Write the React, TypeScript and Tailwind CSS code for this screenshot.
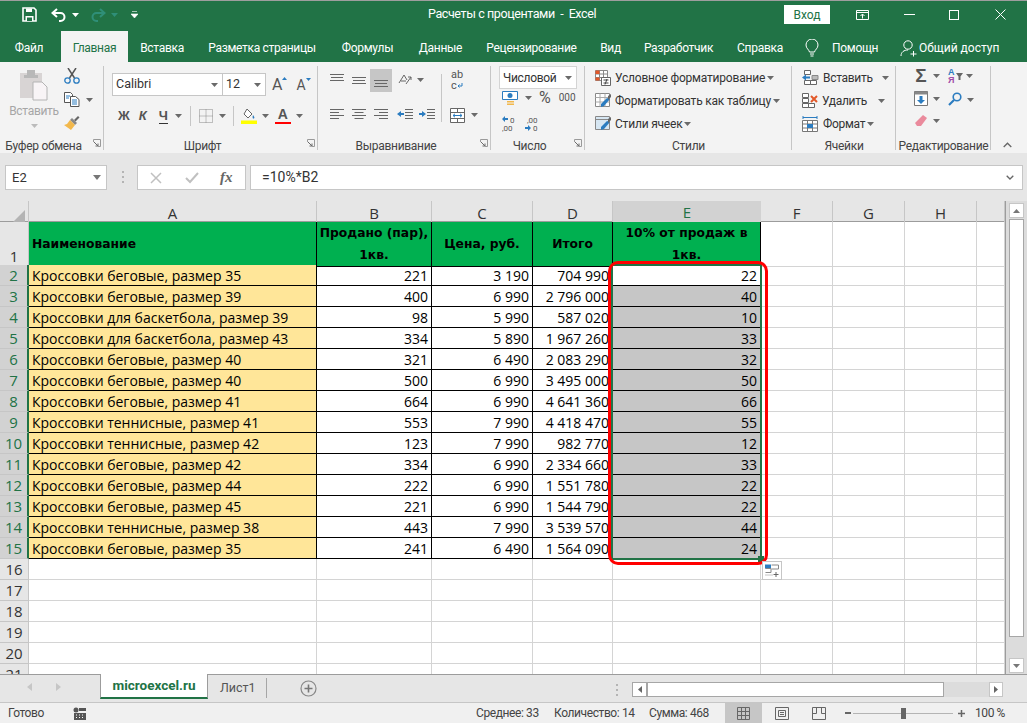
import type { ReactNode } from "react";

const tabs = [
  { label: "Вставка", w: "w-[68px]" },
  { label: "Разметка страницы", w: "w-[132px]" },
  { label: "Формулы", w: "w-[79px]" },
  { label: "Данные", w: "w-[67px]" },
  { label: "Рецензирование", w: "w-[115px]" },
  { label: "Вид", w: "w-[43px]" },
  { label: "Разработчик", w: "w-[93px]" },
  { label: "Справка", w: "w-[70px]" },
];

const columns = ["A", "B", "C", "D", "E", "F", "G", "H", ""];

const rows = [
  ["Кроссовки беговые, размер 35", "221", "3 190", "704 990", "22"],
  ["Кроссовки беговые, размер 39", "400", "6 990", "2 796 000", "40"],
  ["Кроссовки для баскетбола, размер 39", "98", "5 990", "587 020", "10"],
  ["Кроссовки для баскетбола, размер 43", "334", "5 890", "1 967 260", "33"],
  ["Кроссовки беговые, размер 40", "321", "6 490", "2 083 290", "32"],
  ["Кроссовки беговые, размер 40", "500", "6 990", "3 495 000", "50"],
  ["Кроссовки беговые, размер 41", "664", "6 990", "4 641 360", "66"],
  ["Кроссовки теннисные, размер 41", "553", "7 990", "4 418 470", "55"],
  ["Кроссовки теннисные, размер 42", "123", "7 990", "982 770", "12"],
  ["Кроссовки беговые, размер 42", "334", "6 990", "2 334 660", "33"],
  ["Кроссовки беговые, размер 44", "222", "6 990", "1 551 780", "22"],
  ["Кроссовки беговые, размер 45", "221", "6 990", "1 544 790", "22"],
  ["Кроссовки теннисные, размер 38", "443", "7 990", "3 539 570", "44"],
  ["Кроссовки беговые, размер 35", "241", "6 490", "1 564 090", "24"],
];

const gridCols =
  "grid grid-cols-[29px_288px_115px_101px_80px_148px_72px_72px_72px_28px]";

function Caret({ className = "" }: { className?: string }) {
  return (
    <svg width="7" height="4" viewBox="0 0 7 4" className={`shrink-0 ${className}`}>
      <path d="M0 0h7L3.500 4z" fill="#6a6a6a" />
    </svg>
  );
}

function Launcher() {
  return (
    <svg width="8" height="8" viewBox="0 0 8 8" className="absolute right-[3px] bottom-[6px]">
      <path d="M.5 3V.5H7.5V7.500H5" fill="none" stroke="#9a9a9a" />
      <path d="M1 3l4 4M5 4.500V7H2.500" fill="none" stroke="#6a6a6a" />
    </svg>
  );
}

function Group({
  width,
  label,
  launcher,
  children,
}: {
  width: string;
  label: string;
  launcher?: boolean;
  children: ReactNode;
}) {
  return (
    <section className={`relative flex h-[87px] shrink-0 flex-col ${width}`}>
      <div className="h-[73px] shrink-0">{children}</div>
      <div
        className={`flex h-[14px] items-center justify-center whitespace-nowrap text-[12px] tracking-[-0.3px] text-[#444] ${launcher ? "pr-[17px]" : ""}`}
      >
        {label}
      </div>
      {launcher && <Launcher />}
      <div className="absolute top-0 right-0 h-[84px] w-px bg-[#c6c6c6]" />
    </section>
  );
}

function Lines({ kind }: { kind: "top" | "mid" | "bot" | "left" | "center" | "right" }) {
  const d = {
    top: "M0 1.5h14M1 4.5h12M0 7.5h14",
    mid: "M0 4.5h14M1 7.5h12M0 10.5h14",
    bot: "M0 7.5h14M1 10.5h12M0 13.5h14",
    left: "M0 1.5h14M0 4.5h9M0 7.5h14M0 10.5h9",
    center: "M0 1.5h14M2.5 4.5h9M0 7.5h14M2.5 10.5h9",
    right: "M0 1.5h14M5 4.5h9M0 7.5h14M5 10.5h9",
  }[kind];
  return (
    <svg width="14" height="14" viewBox="0 0 14 14">
      <path d={d} stroke="#666" fill="none" />
    </svg>
  );
}

function SaveIcon() {
  return (
    <svg width="15" height="15" viewBox="0 0 15 15">
      <path d="M1 1h11l2 2v11H1z" fill="none" stroke="#fff" strokeWidth="1.6" />
      <path d="M4 1.5h6V5H4zM3.5 9h8v5h-8z" fill="#fff" />
      <path d="M5 10.5h5V14H5z" fill="#217346" />
    </svg>
  );
}

function UndoIcon({ color }: { color: string }) {
  return (
    <svg width="16" height="14" viewBox="0 0 16 14">
      <path d="M6 1L1.5 5 6 9" fill="none" stroke={color} strokeWidth="2" />
      <path d="M2 5h7.5a4 4 0 0 1 0 8H8" fill="none" stroke={color} strokeWidth="2" />
    </svg>
  );
}

function RedoIcon({ color }: { color: string }) {
  return (
    <svg width="16" height="14" viewBox="0 0 16 14">
      <path d="M10 1l4.500 4L10 9" fill="none" stroke={color} strokeWidth="2" />
      <path d="M14 5H6.500a4 4 0 0 0 0 8H8" fill="none" stroke={color} strokeWidth="2" />
    </svg>
  );
}

function TitleBar() {
  return (
    <header className="flex h-[31px] shrink-0 items-center border-t border-[#9e9e9e] bg-[#217346] pb-[3px] text-white">
      <div className="ml-[22px] flex items-center">
        <SaveIcon />
        <span className="ml-[14px]">
          <UndoIcon color="#ffffff" />
        </span>
        <svg width="7" height="4" viewBox="0 0 7 4" className="ml-[5px]">
          <path d="M0 0h7L3.500 4z" fill="#fff" />
        </svg>
        <span className="ml-[11px]">
          <RedoIcon color="#2f8f78" />
        </span>
        <svg width="7" height="4" viewBox="0 0 7 4" className="ml-[5px]">
          <path d="M0 0h7L3.500 4z" fill="#2f8f78" />
        </svg>
        <svg width="7" height="8" viewBox="0 0 7 8" className="ml-[13px]">
          <path d="M1 .5h5M0 3h7L3.500 7z" fill="#fff" stroke="#fff" strokeWidth=".6" />
        </svg>
      </div>
      <div className="ml-[290px] w-[180px] whitespace-pre text-[12.5px] tracking-[-0.4px]">Расчеты с процентами  -  Excel</div>
      <button className="ml-[176px] flex h-[19px] w-[46px] items-center justify-center bg-white text-[12px] text-[#217346]">
        Вход
      </button>
      <svg width="13" height="10" viewBox="0 0 13 10" className="ml-[26px]">
        <path d="M.5.5h12v9H.5zM.5 2.500h12" fill="none" stroke="#fff" />
        <path d="M6.500 8.500V4M4.500 6l2-2 2 2" fill="none" stroke="#fff" />
      </svg>
      <div className="ml-[35px] h-px w-[11px] bg-white" />
      <div className="ml-[34px] size-[10px] border border-white" />
      <svg width="11" height="11" viewBox="0 0 11 11" className="ml-[36px]">
        <path d="M.5.5l10 10M10.500.5l-10 10" stroke="#fff" />
      </svg>
    </header>
  );
}

function TabRow() {
  return (
    <nav className="flex h-[31px] shrink-0 items-stretch bg-[#217346] text-[12px] tracking-[-0.3px] text-white">
      <div className="flex w-[61px] items-center justify-center pt-[3px] pr-[3px]">Файл</div>
      <div className="flex w-[67px] items-center justify-center bg-[#f3f3f3] pt-[3px] text-[#217346]">Главная</div>
      {tabs.map((tab) => (
        <div key={tab.label} className={`flex items-center justify-center whitespace-nowrap pt-[3px] ${tab.w}`}>
          {tab.label}
        </div>
      ))}
      <div className="ml-[10px] flex items-center pt-[3px]">
        <svg width="14" height="18" viewBox="0 0 14 18">
          <path
            d="M4.500 13C4 10.500 1 9.500 1 6a6 6 0 0 1 12 0c0 3.500-3 4.500-3.500 7zM5 15h4M5.500 17h3"
            fill="none"
            stroke="#fff"
          />
        </svg>
      </div>
      <div className="ml-[13px] flex w-[55px] items-center pt-[3px]">Помощн</div>
      <div className="ml-[13px] flex items-center pt-[3px]">
        <svg width="18" height="17" viewBox="0 0 18 17">
          <circle cx="8" cy="5" r="4.200" fill="none" stroke="#fff" />
          <path d="M1 16c0-4 3-6 7-6M13.500 11v5.500M10.500 14h6" fill="none" stroke="#fff" />
        </svg>
      </div>
      <div className="ml-px flex items-center whitespace-nowrap pt-[3px] tracking-normal">Общий доступ</div>
    </nav>
  );
}

function ClipboardGroup() {
  return (
    <Group width="w-[104px]" label="Буфер обмена" launcher>
      <div className="flex">
        <div className="ml-[9px] flex w-[50px] flex-col items-center pt-[3px]">
          <svg width="30" height="32" viewBox="0 0 30 32">
            <path d="M1 4h22v25H1z" fill="#d8d4d4" />
            <path d="M8 1h8v5h3v3H5V6h3z" fill="#b8b8b8" />
            <path d="M14 13h9l5 5v13H14z" fill="#f8f4f6" stroke="#b4b4b4" />
          </svg>
          <div className="mt-[2px] text-[12px] leading-[16px] tracking-[-0.3px] text-[#a6a6a6]">Вставить</div>
          <Caret className="mt-[5px] opacity-40" />
        </div>
        <div className="ml-[5px] flex flex-col gap-[8px] pt-[2px]">
          <svg width="16" height="16" viewBox="0 0 16 16">
            <path d="M4 0l6.500 10M12 0L5.500 10" stroke="#555" strokeWidth="1.5" />
            <circle cx="3.500" cy="12.500" r="2.700" fill="none" stroke="#2b7cc0" strokeWidth="1.3" />
            <circle cx="12.500" cy="12.500" r="2.700" fill="none" stroke="#2b7cc0" strokeWidth="1.3" />
          </svg>
          <div className="flex items-center">
            <svg width="16" height="15" viewBox="0 0 16 15">
              <path d="M.5.500h6l2 2v8H.5z" fill="#fff" stroke="#555" />
              <path d="M6.500 4.500h5l3.500 3v7H6.500z" fill="#fff" stroke="#555" />
              <path d="M2 4h4M2 6h3M8 8h5M8 10h5M8 12h5" stroke="#2b7cc0" />
            </svg>
            <Caret className="ml-[6px]" />
          </div>
          <svg width="16" height="15" viewBox="0 0 16 15">
            <path d="M10 5l4-4 1.500 1.500-4 4z" fill="#666" />
            <path d="M8 3l5 5-2 2-5-5z" fill="#888" />
            <path d="M6 5l5 5-4 5-7-5 3-1z" fill="#f2b84c" />
          </svg>
        </div>
      </div>
    </Group>
  );
}

function FontGroup() {
  return (
    <Group width="w-[214px]" label="Шрифт" launcher>
      <div className="ml-[8px] flex pt-[7px]">
        <div className="flex h-[23px] w-[111px] items-center justify-between border border-[#c6c6c6] bg-white px-[3px] text-[12.5px] text-[#333]">
          Calibri
          <Caret className="mr-[1px]" />
        </div>
        <div className="flex h-[23px] w-[43px] items-center justify-between border border-l-0 border-[#c6c6c6] bg-white px-[3px] text-[12.5px] text-[#333]">
          12
          <Caret className="mr-[1px]" />
        </div>
        <div className="ml-[6px] flex items-center text-[16px] text-[#555]">
          <span>A</span>
          <svg width="5" height="3" viewBox="0 0 5 3" className="mb-[13px]">
            <path d="M0 3h5L2.500 0z" fill="#2b7cc0" />
          </svg>
        </div>
        <div className="ml-[9px] flex items-center text-[14px] text-[#555]">
          <span>A</span>
          <svg width="5" height="3" viewBox="0 0 5 3" className="mb-[12px]">
            <path d="M0 0h5L2.500 3z" fill="#2b7cc0" />
          </svg>
        </div>
      </div>
      <div className="ml-[14px] mt-[9px] flex h-[20px] items-center text-[#555]">
        <span className="font-['Liberation_Sans'] text-[13px] font-bold">Ж</span>
        <span className="ml-[9px] font-['Liberation_Sans'] text-[13px] font-bold italic">К</span>
        <span className="ml-[12px] border-b border-[#333] font-['Liberation_Sans'] text-[13px] leading-[15px] font-bold">Ч</span>
        <Caret className="ml-[7px]" />
        <div className="ml-[8px] h-[20px] w-px bg-[#c6c6c6]" />
        <svg width="14" height="14" viewBox="0 0 14 14" className="ml-[8px]">
          <path d="M.5.500h13v13H.500zM7 .5v13M.5 7h13" fill="none" stroke="#888" strokeDasharray="1 1" />
        </svg>
        <Caret className="ml-[6px]" />
        <div className="ml-[7px] h-[20px] w-px bg-[#c6c6c6]" />
        <svg width="16" height="16" viewBox="0 0 16 16" className="ml-[7px]">
          <path d="M6 1l5 5-4 4-4-4z" fill="#fff" stroke="#666" />
          <path d="M12 7c1 1.500 2 2.500 1 3.500-1 .5-2-.5-1-3.500z" fill="#2b7cc0" />
          <path d="M0 12.500h16V16H0z" fill="#ffff00" />
        </svg>
        <Caret className="ml-[5px]" />
        <div className="ml-[6px] flex h-[16px] w-[16px] flex-col items-center">
          <span className="font-['Liberation_Sans'] text-[14px] leading-[13px] font-bold text-[#555]">A</span>
          <span className="mt-[1px] h-[4px] w-[16px] bg-[#ff0000]" />
        </div>
        <Caret className="ml-[5px]" />
      </div>
    </Group>
  );
}

function AlignGroup() {
  return (
    <Group width="w-[173px]" label="Выравнивание" launcher>
      <div className="flex">
        <div className="ml-[12px] flex flex-col">
          <div className="flex h-[28px] items-center">
            <Lines kind="top" />
            <span className="ml-[8px]">
              <Lines kind="mid" />
            </span>
            <div className="ml-[4px] flex h-[23px] w-[22px] items-center justify-center bg-[#c6c6c6]">
              <Lines kind="bot" />
            </div>
            <svg width="14" height="14" viewBox="0 0 14 14" className="ml-[6px]">
              <path d="M1 10l5-8 3 5M3 8h5M8 11l5-7M13 4h-3M13 4v3" fill="none" stroke="#666" />
            </svg>
            <Caret className="ml-[5px]" />
          </div>
          <div className="mt-[7px] flex h-[28px] items-center">
            <Lines kind="left" />
            <span className="ml-[8px]">
              <Lines kind="center" />
            </span>
            <span className="ml-[8px]">
              <Lines kind="right" />
            </span>
            <svg width="16" height="12" viewBox="0 0 16 12" className="ml-[9px]">
              <path d="M8 .5h8M8 3.500h8M8 6.500h8M8 9.500h8" stroke="#666" />
              <path d="M0 5l4-3v2h3v2H4v2z" fill="#2b7cc0" />
            </svg>
            <svg width="16" height="12" viewBox="0 0 16 12" className="ml-[6px]">
              <path d="M8 .5h8M8 3.500h8M8 6.500h8M8 9.500h8" stroke="#666" />
              <path d="M7 5L3 2v2H0v2h3v2z" fill="#2b7cc0" />
            </svg>
          </div>
        </div>
        <div className="ml-[6px] mt-[8px] h-[48px] w-px bg-[#c6c6c6]" />
        <div className="ml-[8px] flex flex-col">
          <div className="flex h-[28px] flex-col items-start justify-center pl-px text-[11px] leading-[11px] text-[#555]">
            <span>ab</span>
            <span className="flex items-center">
              c
              <svg width="6" height="6" viewBox="0 0 6 6">
                <path d="M5 0v3H1M2.500 1.500L1 3l1.500 1.500" fill="none" stroke="#2b7cc0" />
              </svg>
            </span>
          </div>
          <div className="mt-[7px] flex h-[28px] items-center">
            <svg width="15" height="15" viewBox="0 0 15 15">
              <path d="M.5.500h14v14H.500zM.5 4.500h14M.5 10.500h14M7.500.5v4M7.500 10.500v4" fill="#fff" stroke="#666" />
              <path d="M3 7.500h9M5 5.800L3 7.500l2 1.700M10 5.800l2 1.700-2 1.700" fill="none" stroke="#2b7cc0" />
            </svg>
            <Caret className="ml-[6px]" />
          </div>
        </div>
      </div>
    </Group>
  );
}

function NumberGroup() {
  return (
    <Group width="w-[94px]" label="Число" launcher>
      <div className="ml-[8px] flex h-[23px] w-[78px] items-center justify-between border border-[#d4d4d4] bg-white pr-[4px] pl-[3px] text-[12px] tracking-[-0.3px] text-[#333]">
        Числовой
        <Caret />
      </div>
      <div className="ml-[11px] flex h-[18px] items-center">
        <svg width="17" height="17" viewBox="0 0 17 17">
          <path d="M.5 1.500h15v8H.5z" fill="#fff" stroke="#2b7cc0" />
          <circle cx="8" cy="5.500" r="2.500" fill="#2b7cc0" />
          <path d="M5 11h7v1.500H5zM5 13.500h7V15H5z" fill="#f2b84c" />
        </svg>
        <Caret className="ml-[6px]" />
        <span className="ml-[7px] text-[16px] leading-none text-[#555]">%</span>
        <span className="ml-[8px] text-[10px] leading-none text-[#555]">000</span>
      </div>
      <div className="ml-[11px] mt-[6px] flex h-[20px] items-center">
        <svg width="15" height="17" viewBox="0 0 15 17">
          <path d="M0 4l3-3v2h3v2H3v2z" fill="#2b7cc0" />
          <text x="8" y="8" fontSize="8" fill="#555">0</text>
          <text x="0" y="16" fontSize="8" fill="#555">,00</text>
        </svg>
        <svg width="15" height="17" viewBox="0 0 15 17" className="ml-[8px]">
          <text x="2" y="8" fontSize="8" fill="#555">,00</text>
          <path d="M6 13l-3-3v2H0v2h3v2z" fill="#2b7cc0" />
          <text x="8" y="16" fontSize="8" fill="#555">0</text>
        </svg>
      </div>
    </Group>
  );
}

function GridGlyph({ accent }: { accent: "cond" | "table" | "cell" }) {
  return (
    <svg width="16" height="16" viewBox="0 0 16 16" className="shrink-0">
      {accent === "cond" ? (
        <>
          <path d="M.5.500h12v10H.500zM.5 4h12M.5 7.500h12M4.500.5v10M8.500.5v10" fill="#fff" stroke="#888" />
          <path d="M.5.500h4V4h-4zM.5 7.500h4v3h-4z" fill="#e2592a" />
          <path d="M6.500 7.500h9v8h-9z" fill="#fff" stroke="#666" />
          <path d="M8.500 10h5M8.500 13h5M12 9l-2 5.500" stroke="#444" fill="none" />
        </>
      ) : (
        <>
          <path d="M.5.500h14v13H.500z" fill={accent === "cell" ? "#d6e6f2" : "#fff"} stroke="#888" />
          {accent === "table" && <path d="M.5 4.500h14M.5 9h14M5 .5v13M10 .5v13" stroke="#aaa" fill="none" />}
          {accent === "cell" && <path d="M.5 3.500h14" stroke="#888" />}
          <path d="M6 11l6-6 3 1-6 7-3 1z" fill="#2b7cc0" />
          <path d="M13 3l3-2v3l-3 3z" fill="#666" />
        </>
      )}
    </svg>
  );
}

function StylesGroup() {
  const items = [
    { icon: "cond" as const, label: "Условное форматирование" },
    { icon: "table" as const, label: "Форматировать как таблицу" },
    { icon: "cell" as const, label: "Стили ячеек" },
  ];
  return (
    <Group width="w-[207px]" label="Стили">
      <div className="flex flex-col pl-[10px]">
        {items.map((item) => (
          <div key={item.label} className="flex h-[23px] items-center whitespace-nowrap text-[12px] tracking-[-0.2px] text-[#333]">
            <GridGlyph accent={item.icon} />
            <span className="ml-[4px]">{item.label}</span>
            <Caret className="ml-[2px]" />
          </div>
        ))}
      </div>
    </Group>
  );
}

function CellsGroup() {
  return (
    <Group width="w-[104px]" label="Ячейки">
      <div className="flex flex-col pl-[10px] text-[12px] tracking-[-0.3px] text-[#333]">
        <div className="flex h-[23px] items-center">
          <svg width="17" height="16" viewBox="0 0 17 16" className="shrink-0">
            <path d="M2.500.5h6v4h-6zM2.500 10.500h6v4h-6zM8.500 10.500h6v4h-6z" fill="#fff" stroke="#666" />
            <path d="M10 5.500h6v4h-6z" fill="#bbb" stroke="#888" />
            <path d="M0 7.500l4-3v2h4v2H4v2z" fill="#2b7cc0" />
          </svg>
          <span className="ml-[4px] w-[59px]">Вставить</span>
          <Caret />
        </div>
        <div className="flex h-[23px] items-center">
          <svg width="17" height="16" viewBox="0 0 17 16" className="shrink-0">
            <path d="M.5.5h6v4h-6zM.5 5.500h6v4h-6zM.5 10.500h6v4h-6zM6.500 10.500h6v4h-6z" fill="#fff" stroke="#666" />
            <path d="M9 3l6 6M15 3l-6 6" stroke="#e2592a" strokeWidth="2" />
          </svg>
          <span className="ml-[3px] w-[56px]">Удалить</span>
          <Caret />
        </div>
        <div className="flex h-[23px] items-center">
          <svg width="17" height="16" viewBox="0 0 17 16" className="shrink-0">
            <path d="M1 1.500h14M1 0v3M15 0v3" stroke="#2b7cc0" fill="none" />
            <path d="M.5 4.500h15v11H.500zM.5 8h15M.5 12h15M5.500 4.500v11M10.500 4.500v11" fill="#fff" stroke="#777" />
            <path d="M5 8h6v4H5z" fill="#2b7cc0" />
          </svg>
          <span className="ml-[4px]">Формат</span>
          <Caret className="ml-[2px]" />
        </div>
      </div>
    </Group>
  );
}

function EditGroup() {
  return (
    <Group width="w-[95px]" label="Редактирование">
      <div className="flex pt-[2px] pl-[16px]">
        <div className="flex w-[36px] flex-col gap-[8px]">
          <div className="flex items-center">
            <span className="flex w-[18px] justify-center font-['Liberation_Sans'] text-[19px] leading-[15px] font-bold text-[#555]">Σ</span>
            <Caret className="ml-[3px]" />
          </div>
          <div className="flex items-center pl-[2px]">
            <svg width="14" height="15" viewBox="0 0 14 15">
              <path d="M.5.500h13v14H.500z" fill="#fff" stroke="#777" />
              <path d="M.5.500h13v3H.500z" fill="#888" />
              <path d="M5.500 5h3v4H11l-4 4-4-4h2.500z" fill="#2b7cc0" />
            </svg>
            <Caret className="ml-[5px]" />
          </div>
          <div className="flex items-center pl-[2px]">
            <svg width="14" height="14" viewBox="0 0 14 14">
              <path d="M9 1l4 3-6 8H3l-2-3z" fill="#ea8a9c" />
            </svg>
            <Caret className="ml-[5px]" />
          </div>
        </div>
        <div className="flex flex-col gap-[8px]">
          <div className="flex items-center">
            <span className="flex flex-col items-center font-['Liberation_Sans'] text-[9px] leading-[8px] font-bold">
              <span className="text-[#2b7cc0]">А</span>
              <span className="text-[#a04aa8]">Я</span>
            </span>
            <svg width="7" height="7" viewBox="0 0 7 7" className="ml-px">
              <path d="M0 0h7L4.500 3.500V7h-2V3.500z" fill="#666" />
            </svg>
            <Caret className="ml-[3px]" />
          </div>
          <div className="flex items-center">
            <svg width="14" height="15" viewBox="0 0 14 15">
              <circle cx="9" cy="5" r="3.800" fill="none" stroke="#2b7cc0" strokeWidth="1.6" />
              <path d="M6 8l-5 5" stroke="#2b7cc0" strokeWidth="2.2" />
            </svg>
            <Caret className="ml-[5px]" />
          </div>
        </div>
      </div>
    </Group>
  );
}

function Ribbon() {
  return (
    <div className="relative flex h-[91px] shrink-0 bg-[#f3f3f3] pt-[4px]">
      <ClipboardGroup />
      <FontGroup />
      <AlignGroup />
      <NumberGroup />
      <StylesGroup />
      <CellsGroup />
      <EditGroup />
      <svg width="9" height="6" viewBox="0 0 9 6" className="absolute right-[15px] bottom-[5px]">
        <path d="M.7 5l3.800-3.800L8.300 5" fill="none" stroke="#666" strokeWidth="1.3" />
      </svg>
    </div>
  );
}

function FormulaBar() {
  return (
    <div className="flex h-[48px] shrink-0 items-start bg-[#e6e6e6] pt-[12px] pl-[5px]">
      <div className="flex h-[25px] w-[102px] items-center justify-between border border-[#c6c6c6] bg-white pr-[3px] pl-[6px] text-[13px] text-[#333]">
        E2
        <svg width="8" height="5" viewBox="0 0 8 5" className="mr-[2px]">
          <path d="M0 0h8L4 5z" fill="#777" />
        </svg>
      </div>
      <div className="ml-[15px] mt-[6px] flex h-[12px] w-[3px] flex-col justify-between">
        <span className="size-[2px] bg-[#b4b4b4]" />
        <span className="size-[2px] bg-[#b4b4b4]" />
        <span className="size-[2px] bg-[#b4b4b4]" />
      </div>
      <div className="ml-[12px] flex h-[25px] w-[109px] items-center border border-[#c6c6c6] bg-white">
        <svg width="12" height="12" viewBox="0 0 12 12" className="ml-[12px]">
          <path d="M1 1l10 10M11 1L1 11" stroke="#c0c0c0" strokeWidth="1.5" />
        </svg>
        <svg width="14" height="12" viewBox="0 0 14 12" className="ml-[23px]">
          <path d="M1 6l4 4 8-9" fill="none" stroke="#c0c0c0" strokeWidth="2" />
        </svg>
        <span className="ml-[21px] font-['Liberation_Serif'] text-[15px] font-bold italic text-[#666]">fx</span>
      </div>
      <div className="ml-[4px] flex h-[25px] w-[773px] items-center justify-between border border-[#c6c6c6] bg-white pr-[8px] pl-[11px] text-[14px] text-[#333]">
        =10%*B2
        <svg width="8" height="5" viewBox="0 0 8 5">
          <path d="M.7.7L4 4l3.300-3.300" fill="none" stroke="#666" strokeWidth="1.3" />
        </svg>
      </div>
    </div>
  );
}

function ColumnHeaders() {
  return (
    <div className={`${gridCols} h-[21px] border-b border-[#9c9c9c] bg-[#e6e6e6]`}>
      <div className="flex items-end justify-end border-r border-[#c6c6c6] pr-[3px] pb-[3px]">
        <svg width="13" height="13" viewBox="0 0 13 13">
          <path d="M13 0v13H0z" fill="#b4b4b4" />
        </svg>
      </div>
      {columns.map((col, i) => (
        <div
          key={col || "I"}
          className={
            i === 4
              ? "flex items-center justify-center border-b-2 border-[#217346] bg-[#d2d2d2] text-[15px] text-[#217346]"
              : "flex items-center justify-center border-r border-[#c6c6c6] text-[15px] text-[#333]"
          }
        >
          {col}
        </div>
      ))}
    </div>
  );
}

function RowHead({ n, selected }: { n: number; selected?: boolean }) {
  return (
    <div
      className={
        selected
          ? "flex items-end justify-center border-r-2 border-b border-[#217346] border-b-[#c6c6c6] bg-[#d2d2d2] text-[15px] leading-[20px] text-[#217346]"
          : "flex items-end justify-center border-r border-b border-[#c6c6c6] bg-[#e6e6e6] text-[15px] leading-[20px] text-[#333]"
      }
    >
      {n}
    </div>
  );
}

function HeaderCell({ children }: { children: ReactNode }) {
  return (
    <div className="flex items-center justify-center border-r border-b border-black bg-[#00b050] text-center font-['DejaVu_Sans'] text-[12.3px] leading-[22px] font-bold text-black">
      <span>{children}</span>
    </div>
  );
}

function EmptyCells() {
  return (
    <>
      {[0, 1, 2, 3, 4, 5, 6, 7, 8].map((i) => (
        <div key={i} className="border-r border-b border-[#d4d4d4]" />
      ))}
    </>
  );
}

function Sheet() {
  return (
    <div className="relative min-w-0 flex-1 overflow-hidden bg-white font-['Open_Sans','Noto_Sans',sans-serif]">
      <ColumnHeaders />
      <div className={`${gridCols} h-[43px]`}>
        <RowHead n={1} />
        <div className="flex items-center justify-start border-r border-b border-black bg-[#00b050] pl-[3px] font-['DejaVu_Sans'] text-[12.3px] font-bold text-black">
          Наименование
        </div>
        <HeaderCell>Продано (пар), 1кв.</HeaderCell>
        <HeaderCell>Цена, руб.</HeaderCell>
        <HeaderCell>Итого</HeaderCell>
        <HeaderCell>10% от продаж в 1кв.</HeaderCell>
        <div className="border-r border-b border-[#d4d4d4]" />
        <div className="border-r border-b border-[#d4d4d4]" />
        <div className="border-r border-b border-[#d4d4d4]" />
        <div className="border-r border-b border-[#d4d4d4]" />
      </div>
      {rows.map((row, i) => (
        <div key={i} className={`${gridCols} h-[21px] text-[14px] leading-[18px] text-black`}>
          <RowHead n={i + 2} selected />
          <div className="overflow-hidden border-r border-b border-black bg-[#ffe699] pt-[2px] pl-[3px] whitespace-nowrap">{row[0]}</div>
          <div className="border-r border-b border-black pt-[2px] pr-[3px] text-right">{row[1]}</div>
          <div className="border-r border-b border-black pt-[2px] pr-[3px] text-right">{row[2]}</div>
          <div className="border-r border-b border-black pt-[2px] pr-[3px] text-right whitespace-nowrap">{row[3]}</div>
          <div className={`border-r border-b border-black pt-[2px] pr-[3px] text-right ${i === 0 ? "bg-white" : "bg-[#c6c6c6]"}`}>{row[4]}</div>
          <div className="border-r border-b border-[#d4d4d4]" />
          <div className="border-r border-b border-[#d4d4d4]" />
          <div className="border-r border-b border-[#d4d4d4]" />
          <div className="border-r border-b border-[#d4d4d4]" />
        </div>
      ))}
      {[16, 17, 18, 19, 20, 21].map((n) => (
        <div key={n} className={`${gridCols} h-[21px]`}>
          <RowHead n={n} />
          <EmptyCells />
        </div>
      ))}
      {/* выделение и красная рамка поверх сетки */}
      <div className="absolute top-[63px] left-[611px] h-[296px] w-[151px] border-2 border-[#217346]" />
      <div className="absolute top-[355px] left-[758px] size-[6px] bg-[#217346]" />
      <div className="absolute top-[60px] left-[608px] h-[304px] w-[160px] rounded-[10px] border-[3.5px] border-[#ff0000]" />
      <div className="absolute top-[360px] left-[762px] flex h-[19px] w-[20px] items-center justify-center border border-[#c6c6c6] bg-white">
        <svg width="15" height="14" viewBox="0 0 15 14">
          <path d="M0 .5h6v4H0z" fill="#2b7cc0" />
          <path d="M6.500 1h7v4h-7M.5 4.500H6v4H.5" fill="none" stroke="#888" />
          <path d="M.5 11h7" stroke="#888" strokeDasharray="1 1" />
          <path d="M11 8v5M8.500 10.500h5" stroke="#666" />
        </svg>
      </div>
    </div>
  );
}

function VerticalScroll() {
  return (
    <div className="flex w-[22px] shrink-0 flex-col items-center border-l border-[#9c9c9c] bg-[#dcdcdc] pt-[2px] pr-[3px] pl-[3px]">
      <div className="flex h-[15px] w-[15px] items-center justify-center border border-[#c6c6c6] bg-white">
        <svg width="7" height="4" viewBox="0 0 7 4">
          <path d="M0 4h7L3.500 0z" fill="#777" />
        </svg>
      </div>
      <div className="mt-px h-[418px] w-[15px] border border-[#a6a6a6] bg-white" />
      <div className="flex-1" />
      <div className="mb-px flex h-[15px] w-[15px] items-center justify-center border border-[#c6c6c6] bg-white">
        <svg width="7" height="4" viewBox="0 0 7 4">
          <path d="M0 0h7L3.500 4z" fill="#777" />
        </svg>
      </div>
    </div>
  );
}

function SheetTabs() {
  return (
    <div className="flex h-[28px] shrink-0 bg-[#e6e6e6]">
      <div className="flex w-[100px] items-center border-t border-[#9c9c9c] pl-[27px] pb-[4px]">
        <svg width="5" height="8" viewBox="0 0 5 8">
          <path d="M5 0v8L0 4z" fill="#c6c6c6" />
        </svg>
        <svg width="5" height="8" viewBox="0 0 5 8" className="ml-[24px]">
          <path d="M0 0v8l5-4z" fill="#c6c6c6" />
        </svg>
      </div>
      <div className="flex h-[25px] w-[108px] items-center justify-center border-x border-b-2 border-x-[#9c9c9c] border-b-[#217346] bg-white text-[13.5px] font-bold text-[#217346]">
        microexcel.ru
      </div>
      <div className="flex flex-1 items-start border-t border-[#9c9c9c]">
        <div className="ml-[12px] mt-[3px] flex h-[20px] w-[36px] items-center text-[12.5px] text-[#555]">Лист1</div>
        <div className="ml-[10px] mt-[3px] h-[20px] w-px bg-[#a6a6a6]" />
        <svg width="17" height="17" viewBox="0 0 17 17" className="ml-[33px] mt-[5px]">
          <circle cx="8.5" cy="8.500" r="7.500" fill="none" stroke="#888" strokeWidth="1.2" />
          <path d="M8.500 4.500v8M4.500 8.500h8" stroke="#777" strokeWidth="1.6" />
        </svg>
        <div className="ml-[299px] mt-[9px] flex h-[12px] w-[3px] flex-col justify-between">
          <span className="size-[2px] bg-[#b4b4b4]" />
          <span className="size-[2px] bg-[#b4b4b4]" />
          <span className="size-[2px] bg-[#b4b4b4]" />
        </div>
        <div className="ml-[13px] mt-[7px] flex h-[15px] w-[371px] bg-[#dcdcdc]">
          <div className="flex w-[15px] items-center justify-center border border-[#a6a6a6] bg-white">
            <svg width="4" height="7" viewBox="0 0 4 7">
              <path d="M4 0v7L0 3.500z" fill="#666" />
            </svg>
          </div>
          <div className="w-[297px] border border-[#a6a6a6] bg-white" />
          <div className="flex-1" />
          <div className="flex w-[14px] items-center justify-center border border-[#c6c6c6] bg-white">
            <svg width="4" height="7" viewBox="0 0 4 7">
              <path d="M0 0v7l4-3.500z" fill="#666" />
            </svg>
          </div>
        </div>
      </div>
    </div>
  );
}

function StatusBar() {
  return (
    <footer className="flex h-[21px] shrink-0 items-center border-t border-[#c6c6c6] bg-[#f0f0f0] text-[12px] tracking-[-0.4px] text-[#444]">
      <span className="ml-[8px] w-[65px]">Готово</span>
      <svg width="13" height="13" viewBox="0 0 13 13">
        <circle cx="3" cy="3" r="2.500" fill="#555" />
        <path d="M6 1h7v3H6zM1 6h12v7H1z" fill="#555" />
        <path d="M3 8h1M6 8h1M9 8h1M3 10.500h1M6 10.500h1M9 10.500h1" stroke="#fff" />
      </svg>
      <span className="ml-[390px] w-[78px] whitespace-nowrap">Среднее: 33</span>
      <span className="w-[95px] whitespace-nowrap">Количество: 14</span>
      <span className="w-[76px] whitespace-nowrap">Сумма: 468</span>
      <div className="flex h-[20px] w-[37px] items-center justify-center bg-[#c6c6c6]">
        <svg width="13" height="13" viewBox="0 0 13 13">
          <path d="M.5.500h12v12H.500zM4.500.5v12M8.500.5v12M.5 4.500h12M.5 8.500h12" fill="none" stroke="#666" />
        </svg>
      </div>
      <svg width="14" height="13" viewBox="0 0 14 13" className="ml-[13px]">
        <path d="M.5.500h13v12H.500z" fill="none" stroke="#666" />
        <path d="M3.500 3.500h7v6h-7zM5 5.500h4M5 7.500h4" fill="none" stroke="#666" />
      </svg>
      <svg width="14" height="13" viewBox="0 0 14 13" className="ml-[23px]">
        <path d="M.5.500h13v12H.500zM.5 6.500h4v-6M9.500.5v6h4" fill="none" stroke="#666" />
      </svg>
      <div className="ml-[19px] h-[2px] w-[6px] bg-[#666]" />
      <div className="relative ml-[2px] h-px w-[100px] bg-[#b4b4b4]">
        <div className="absolute top-[-5px] left-[48px] h-[11px] w-[5px] bg-[#666]" />
      </div>
      <svg width="7" height="7" viewBox="0 0 7 7" className="ml-[5px]">
        <path d="M3.500 0v7M0 3.500h7" stroke="#666" strokeWidth="1.5" />
      </svg>
      <span className="ml-[10px] whitespace-nowrap">100 %</span>
    </footer>
  );
}

export default function App() {
  return (
    <div className="flex h-[723px] w-[1027px] flex-col overflow-hidden bg-[#e6e6e6] font-['Roboto','Noto_Sans',sans-serif]">
      <TitleBar />
      <TabRow />
      <Ribbon />
      <FormulaBar />
      <div className="flex h-[473px] shrink-0">
        <Sheet />
        <VerticalScroll />
      </div>
      <SheetTabs />
      <StatusBar />
    </div>
  );
}
